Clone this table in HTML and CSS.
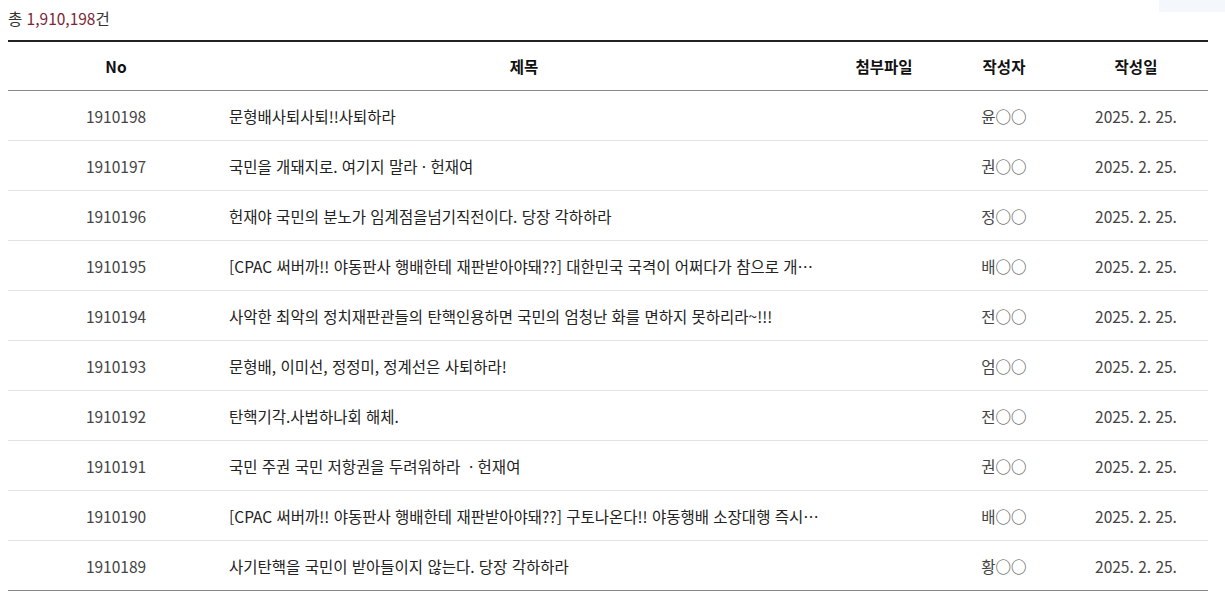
FILE: index.html
```html
<!DOCTYPE html>
<html lang="ko">
<head>
<meta charset="utf-8">
<title>게시판 목록</title>
<link rel="stylesheet" href="styles.css">
</head>
<body>
<div class="corner"></div>
<div class="board">
  <p class="total">총 <strong class="count">1,910,198</strong>건</p>
  <table class="list">
    <colgroup>
      <col class="c-no"><col class="c-title"><col class="c-file"><col class="c-writer"><col class="c-date">
    </colgroup>
    <thead>
      <tr><th>No</th><th>제목</th><th>첨부파일</th><th>작성자</th><th>작성일</th></tr>
    </thead>
    <tbody>
      <tr><td>1910198</td><td class="title">문형배사퇴사퇴!!사퇴하라</td><td></td><td>윤○○</td><td>2025. 2. 25.</td></tr>
      <tr><td>1910197</td><td class="title">국민을 개돼지로. 여기지 말라 · 헌재여</td><td></td><td>권○○</td><td>2025. 2. 25.</td></tr>
      <tr><td>1910196</td><td class="title">헌재야 국민의 분노가 임계점을넘기직전이다. 당장 각하하라</td><td></td><td>정○○</td><td>2025. 2. 25.</td></tr>
      <tr><td>1910195</td><td class="title">[CPAC 써버까!! 야동판사 행배한테 재판받아야돼??] 대한민국 국격이 어쩌다가 참으로 개…</td><td></td><td>배○○</td><td>2025. 2. 25.</td></tr>
      <tr><td>1910194</td><td class="title">사악한 최악의 정치재판관들의 탄핵인용하면 국민의 엄청난 화를 면하지 못하리라~!!!</td><td></td><td>전○○</td><td>2025. 2. 25.</td></tr>
      <tr><td>1910193</td><td class="title">문형배, 이미선, 정정미, 정계선은 사퇴하라!</td><td></td><td>엄○○</td><td>2025. 2. 25.</td></tr>
      <tr><td>1910192</td><td class="title">탄핵기각.사법하나회 해체.</td><td></td><td>전○○</td><td>2025. 2. 25.</td></tr>
      <tr><td>1910191</td><td class="title">국민 주권 국민 저항권을 두려워하라 &nbsp;· 헌재여</td><td></td><td>권○○</td><td>2025. 2. 25.</td></tr>
      <tr><td>1910190</td><td class="title">[CPAC 써버까!! 야동판사 행배한테 재판받아야돼??] 구토나온다!! 야동행배 소장대행 즉시…</td><td></td><td>배○○</td><td>2025. 2. 25.</td></tr>
      <tr><td>1910189</td><td class="title">사기탄핵을 국민이 받아들이지 않는다. 당장 각하하라</td><td></td><td>황○○</td><td>2025. 2. 25.</td></tr>
    </tbody>
  </table>
</div>
</body>
</html>
```

FILE: styles.css
```css
html, body {
  margin: 0;
  padding: 0;
  background: #fff;
}
body {
  font-family: "Noto Sans CJK KR", "Noto Sans", sans-serif;
  font-size: 15.5px;
  color: #333;
}
.corner {
  position: absolute;
  top: 0;
  right: 0;
  width: 66px;
  height: 12px;
  background: #f4f7fb;
}
.board {
  padding: 0 17px 0 8px;
}
.total {
  margin: 0;
  padding-top: 8px;
  height: 40px;
  line-height: 20px;
  box-sizing: border-box;
  font-size: 15.5px;
  color: #333;
}
.count {
  font-weight: normal;
  color: #7b2636;
}
.list {
  width: 1200px;
  border-collapse: collapse;
  table-layout: fixed;
  border-top: 2px solid #222;
  border-bottom: 1px solid #888;
}
.c-no { width: 216px; }
.c-title { width: 600px; }
.c-file { width: 120px; }
.c-writer { width: 120px; }
.c-date { width: 144px; }
.list th {
  height: 48px;
  font-weight: bold;
  color: #111;
  font-size: 15.5px;
  text-align: center;
  border-bottom: 1px solid #888;
  padding: 0;
}
.list td {
  height: 49px;
  padding: 0;
  text-align: center;
  border-bottom: 1px solid #e3e3e3;
  color: #444;
  white-space: nowrap;
}
.list tbody tr:last-child td {
  border-bottom: 1px solid #888;
}
.list td.title {
  text-align: left;
  padding: 0 0 0 5px;
  overflow: hidden;
  color: #222;
}
```
